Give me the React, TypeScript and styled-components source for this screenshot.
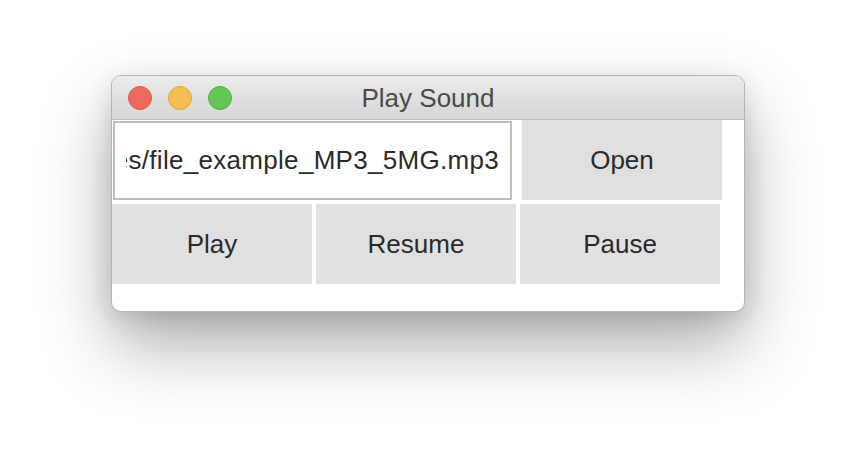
import React from "react";
import styled, { createGlobalStyle } from "styled-components";

const Global = createGlobalStyle`
  html, body { margin: 0; padding: 0; background: #ffffff; }
  body { font-family: "Liberation Sans", Arial, sans-serif; }
`;

const Page = styled.div`
  width: 856px;
  height: 460px;
  box-sizing: border-box;
  padding: 75px 0 0 111px;
  background: #ffffff;
  overflow: hidden;
`;

const Window = styled.div`
  width: 634px;
  height: 237px;
  box-sizing: border-box;
  border: 1px solid #b4b4b4;
  border-radius: 10px;
  background: #ffffff;
  overflow: hidden;
  display: flex;
  flex-direction: column;
  box-shadow: 0 34px 70px rgba(0, 0, 0, 0.32), 0 6px 24px rgba(0, 0, 0, 0.12);
`;

const TitleBar = styled.div`
  height: 44px;
  box-sizing: border-box;
  flex: none;
  display: grid;
  grid-template-columns: 1fr auto 1fr;
  align-items: center;
  padding: 0 16px;
  background: linear-gradient(#ebebeb, #d6d6d6);
  border-bottom: 1px solid #c2c2c2;
`;

const Lights = styled.div`
  display: flex;
  gap: 16px;
  align-items: center;
`;

const Light = styled.span<{ $fill: string; $edge: string }>`
  width: 24px;
  height: 24px;
  box-sizing: border-box;
  border-radius: 50%;
  background: ${(p) => p.$fill};
  border: 1px solid ${(p) => p.$edge};
`;

const Title = styled.div`
  font-size: 26px;
  color: #4a4a4a;
  line-height: 1;
  padding-top: 1px;
`;

const Body = styled.div`
  display: flex;
  flex-direction: column;
  gap: 4px;
`;

const Row = styled.div<{ $gap: number }>`
  display: flex;
  gap: ${(p) => p.$gap}px;
  height: 80px;
`;

const Field = styled.div`
  width: 399px;
  height: 79px;
  margin: 1px 0 0 1px;
  box-sizing: border-box;
  border: 2px solid #bdbdbd;
  background: #ffffff;
  padding: 0 11px 0 11px;
  display: flex;
  align-items: center;
`;

const Clip = styled.div`
  flex: 1;
  min-width: 0;
  overflow: hidden;
  display: flex;
  justify-content: flex-end;
`;

const FieldText = styled.span`
  white-space: nowrap;
  font-size: 26px;
  letter-spacing: 0.3px;
  color: #2a2a2a;
`;

const Button = styled.button`
  width: 200px;
  height: 80px;
  flex: none;
  border: none;
  margin: 0;
  padding: 0;
  background: #e0e0e0;
  font-family: "Liberation Sans", Arial, sans-serif;
  font-size: 26px;
  color: #2a2a2a;
  display: flex;
  align-items: center;
  justify-content: center;
`;

export default function App() {
  return (
    <>
      <Global />
      <Page>
        <Window>
          <TitleBar>
            <Lights>
              <Light $fill="#ee6a5f" $edge="#d85a4f" />
              <Light $fill="#f6be50" $edge="#dfa53a" />
              <Light $fill="#62c655" $edge="#52ad44" />
            </Lights>
            <Title>Play Sound</Title>
            <span />
          </TitleBar>
          <Body>
            <Row $gap={10}>
              <Field>
                <Clip>
                  <FieldText>/Users/music/Downloads/Samples/file_example_MP3_5MG.mp3</FieldText>
                </Clip>
              </Field>
              <Button>Open</Button>
            </Row>
            <Row $gap={4}>
              <Button>Play</Button>
              <Button>Resume</Button>
              <Button>Pause</Button>
            </Row>
          </Body>
        </Window>
      </Page>
    </>
  );
}
